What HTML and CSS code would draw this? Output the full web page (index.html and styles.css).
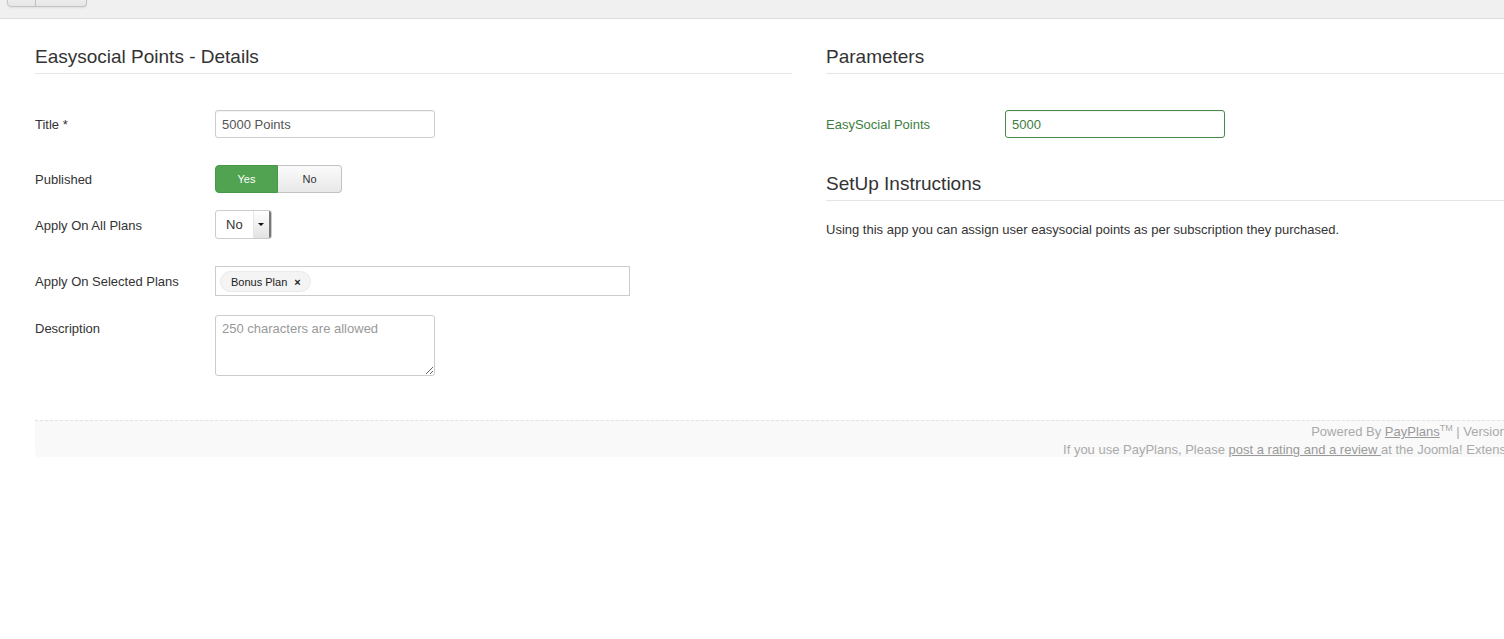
FILE: index.html
```html
<!DOCTYPE html>
<html lang="en">
<head>
  <meta charset="UTF-8" />
  <title>Easysocial Points - Details</title>
  <link rel="stylesheet" href="styles.css">
</head>
<body>
  <div class="toolbar">
    <div class="btn-group">
      <span class="tb-btn tb-small"></span>
      <span class="tb-btn tb-wide"></span>
    </div>
  </div>

  <div class="container">
    <div class="columns">
      <!-- left: app details -->
      <div class="col">
        <h3 class="legend">Easysocial Points - Details</h3>

        <div class="form-row row-title">
          <label class="control-label">Title *</label>
          <input class="text-input" type="text" value="5000 Points">
        </div>

        <div class="form-row row-published">
          <label class="control-label">Published</label>
          <div class="toggle">
            <span class="toggle-btn yes">Yes</span>
            <span class="toggle-btn no">No</span>
          </div>
        </div>

        <div class="form-row row-all">
          <label class="control-label">Apply On All Plans</label>
          <div class="fake-select">
            <span class="fake-select-value">No</span>
            <span class="fake-select-arrow"></span>
          </div>
        </div>

        <div class="form-row row-selected">
          <label class="control-label">Apply On Selected Plans</label>
          <div class="chosen">
            <span class="chip">Bonus Plan <b>×</b></span>
          </div>
        </div>

        <div class="form-row row-desc">
          <label class="control-label">Description</label>
          <textarea class="desc" placeholder="250 characters are allowed"></textarea>
        </div>
      </div>

      <!-- right: parameters -->
      <div class="col">
        <h3 class="legend">Parameters</h3>

        <div class="form-row row-param">
          <label class="control-label success">EasySocial Points</label>
          <input class="text-input input-success" type="text" value="5000">
        </div>

        <h3 class="legend legend-second">SetUp Instructions</h3>
        <p class="instructions">Using this app you can assign user easysocial points as per subscription they purchased.</p>
      </div>
    </div>

    <div class="footer">
      <div>Powered By <a href="#">PayPlans</a><sup>TM</sup> | Version 3.4.1.48736</div>
      <div>If you use PayPlans, Please <a href="#">post a rating and a review </a>at the Joomla! Extension Directory</div>
    </div>
  </div>
</body>
</html>
```

FILE: styles.css
```css
html, body {
  overflow-x: hidden;
}
body {
  margin: 0;
  background: #fff;
  font-family: "Liberation Sans", Arial, sans-serif;
  font-size: 13px;
  line-height: 18px;
  color: #333;
}

/* top toolbar, scrolled so only the bottom edge shows */
.toolbar {
  height: 18px;
  background: #f0f0f0;
  border-bottom: 1px solid #dcdcdc;
  overflow: hidden;
  padding-left: 7px;
}
.btn-group {
  display: flex;
  margin-top: -20px;
}
.tb-btn {
  display: block;
  height: 25px;
  background: linear-gradient(to bottom, #fff, #e6e6e6);
  border: 1px solid #c4c4c4;
  box-shadow: 0 1px 2px rgba(0,0,0,0.08);
}
.tb-small {
  width: 27px;
  border-radius: 0 0 0 4px;
}
.tb-wide {
  width: 50px;
  border-left: none;
  border-radius: 0 0 4px 0;
}

.container {
  width: 1550px;
  padding-left: 35px;
}
.columns {
  display: grid;
  grid-template-columns: 757px 757px;
  column-gap: 34px;
}

.legend {
  margin: 24px 0 0;
  font-size: 19px;
  font-weight: normal;
  line-height: 26px;
  padding: 1px 0 3px;
  border-bottom: 1px solid #e5e5e5;
  color: #333;
}
.legend-second {
  margin-top: 32px;
}

.form-row {
  display: grid;
  grid-template-columns: 180px auto;
  align-items: center;
  justify-items: start;
}
.col:last-child .form-row {
  grid-template-columns: 179px auto;
}
.row-title { margin-top: 36px; height: 28px; }
.row-published { margin-top: 27px; height: 28px; }
.row-all { margin-top: 17px; height: 29px; }
.row-all .control-label { padding-top: 2px; }
.row-selected { margin-top: 27px; height: 30px; }
.row-desc { margin-top: 19px; align-items: start; }
.row-desc .control-label { padding-top: 5px; }
.row-param { margin-top: 36px; height: 28px; }

.control-label {
  color: #333;
  padding-top: 1px;
}
.control-label.success {
  color: #3d7d3f;
}

.text-input {
  box-sizing: border-box;
  width: 220px;
  height: 28px;
  padding: 4px 6px;
  border: 1px solid #ccc;
  border-radius: 3px;
  font-family: inherit;
  font-size: 13px;
  color: #555;
  box-shadow: inset 0 1px 1px rgba(0,0,0,0.05);
}
.input-success {
  border-color: #468847;
  color: #3d7d3f;
}

.toggle {
  display: flex;
  height: 28px;
}
.toggle-btn {
  box-sizing: border-box;
  display: flex;
  align-items: center;
  justify-content: center;
  font-size: 11px;
}
.toggle-btn.yes {
  width: 63px;
  background: #51a351;
  color: #fff;
  border: 1px solid #459845;
  border-radius: 4px 0 0 4px;
}
.toggle-btn.no {
  width: 64px;
  background: linear-gradient(to bottom, #fbfbfb, #e8e8e8);
  color: #333;
  border: 1px solid #c2c2c2;
  border-left: none;
  border-radius: 0 4px 4px 0;
}

.fake-select {
  box-sizing: border-box;
  display: flex;
  width: 57px;
  height: 29px;
  border: 1px solid #ccc;
  border-radius: 3px;
  overflow: hidden;
}
.fake-select-value {
  flex: 1;
  padding-left: 10px;
  line-height: 28px;
}
.fake-select-arrow {
  position: relative;
  width: 16px;
  background: linear-gradient(to bottom, #fff, #e2e2e2);
  border-right: 2px solid #777;
  box-shadow: inset 1px 0 0 #e6e6e6;
}
.fake-select-arrow::after {
  content: '';
  position: absolute;
  left: 5px;
  top: 12px;
  border-left: 3px solid transparent;
  border-right: 3px solid transparent;
  border-top: 3px solid #111;
}

.chosen {
  box-sizing: border-box;
  width: 415px;
  height: 30px;
  border: 1px solid #ccc;
  padding: 4px 4px;
}
.chip {
  display: inline-block;
  box-sizing: border-box;
  height: 21px;
  padding: 0 9px 0 10px;
  line-height: 20px;
  font-size: 11px;
  color: #222;
  background: #f4f4f4;
  border: 1px solid #e9e9e9;
  border-radius: 11px;
}
.chip b {
  margin-left: 4px;
  font-size: 11px;
}

.desc {
  box-sizing: border-box;
  width: 220px;
  height: 61px;
  padding: 5px 6px;
  border: 1px solid #ccc;
  border-radius: 3px;
  font-family: inherit;
  font-size: 13px;
  margin: 0;
}
.desc::placeholder {
  color: #999;
}

.instructions {
  margin: 20px 0 0;
}

.footer {
  margin-top: 44px;
  height: 37px;
  box-sizing: border-box;
  background: #f9f9f9;
  border-top: 1px dashed #e2e2e2;
  border-radius: 0 0 0 4px;
  padding: 2px 6px 0 0;
  text-align: right;
  color: #aaa;
  line-height: 18px;
}
.footer a {
  color: #999;
  text-decoration: underline;
}
.footer sup {
  font-size: 9px;
  line-height: 0;
}
```
